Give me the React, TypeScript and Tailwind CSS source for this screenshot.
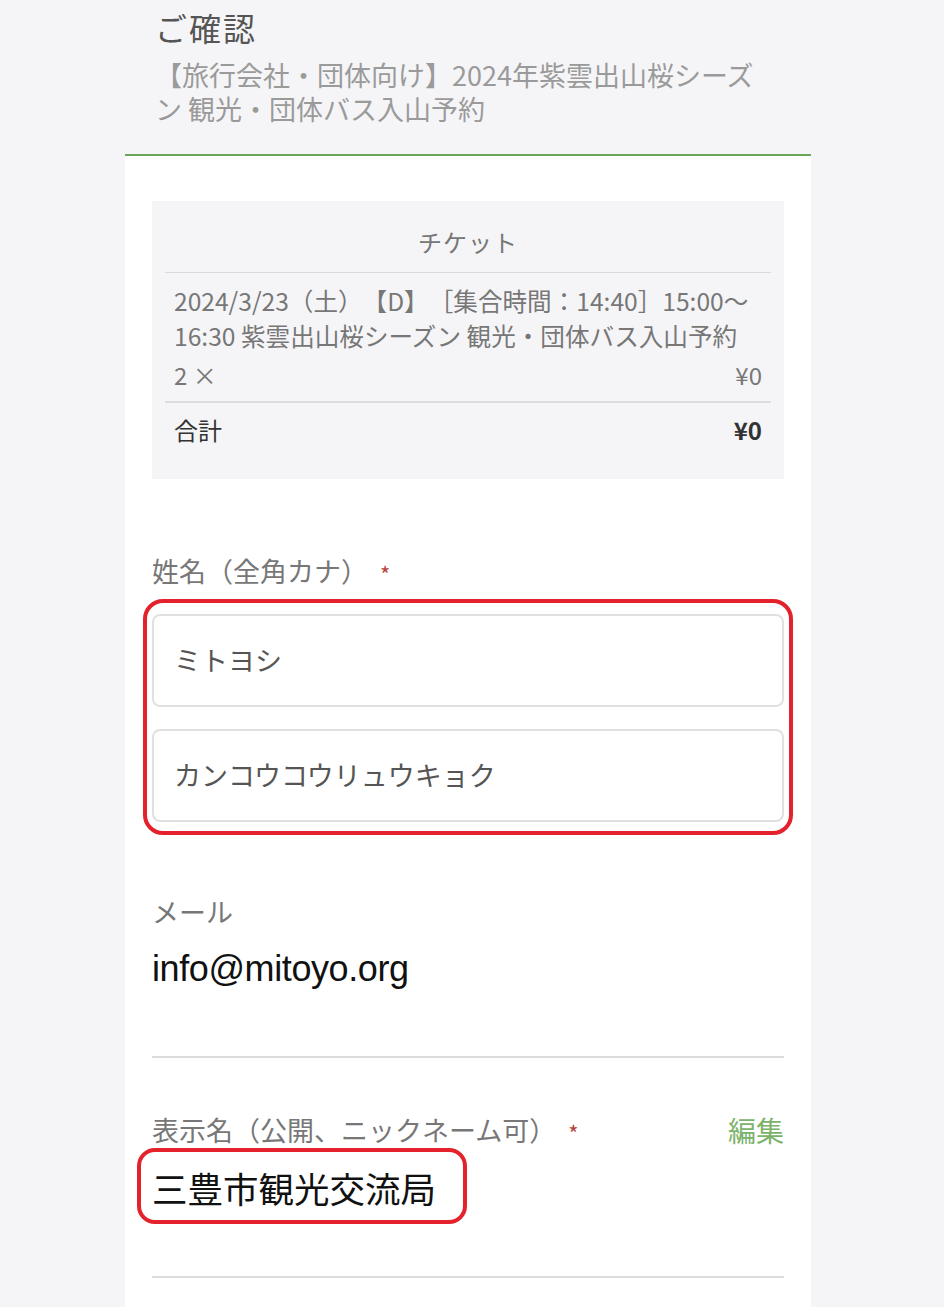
export default function App() {
  return (
    <div className="min-h-[1307px] bg-[#f5f5f7] font-['Noto_Sans_CJK_JP','Noto_Sans',sans-serif] [text-spacing-trim:space-all]">
      <div className="ml-[125px] w-[686px]">
        {/* Header */}
        <div className="px-[30px] pb-[28px] pt-[7px]">
          <h1 className="text-[32px] leading-[40px] tracking-[2px] text-[#555]">ご確認</h1>
          <p className="mt-[11px] max-w-[625px] text-[27px] leading-[34px] text-[#9a9a9a]">
            【旅行会社・団体向け】2024年紫雲出山桜シーズン 観光・団体バス入山予約
          </p>
        </div>

        {/* Card */}
        <div className="border-t-2 border-[#6aa65a] bg-white px-[27px] pb-[40px] pt-[45px]">
          {/* Ticket summary */}
          <div className="bg-[#f5f5f7] px-[13px] pb-[32px]">
            <div className="pb-[13px] pt-[24px] text-center text-[24px] leading-[34px] tracking-[1px] text-[#777]">チケット</div>
            <div className="h-px bg-[#dadada]" />
            <div className="px-[9px] pt-[10px] text-[24.6px] leading-[35px] text-[#777]">
              2024/3/23（土）【D】［集合時間：14:40］15:00〜16:30 紫雲出山桜シーズン 観光・団体バス入山予約
            </div>
            <div className="mt-[5px] flex justify-between px-[9px] text-[24px] leading-[34px] text-[#777]">
              <span>2 ×</span>
              <span>¥0</span>
            </div>
            <div className="mt-[9px] h-[2px] bg-[#dcdcdc]" />
            <div className="flex justify-between px-[9px] pt-[10px] text-[24px] leading-[34px] text-[#333]">
              <span>合計</span>
              <span className="font-bold">¥0</span>
            </div>
          </div>

          {/* Name (kana) */}
          <div className="mt-[75px] flex items-center text-[27px] leading-[34px] text-[#777]">
            <span>姓名（全角カナ）</span>
            <span className="ml-[12px] mt-[4px] text-[22px] leading-none text-[#b5423c]">*</span>
          </div>
          <div className="relative mt-[26px] flex flex-col gap-[22px]">
            <div className="flex h-[93px] items-center rounded-[8px] border-2 border-[#e0e0e0] px-[20px] text-[27px] text-[#555]">
              ミトヨシ
            </div>
            <div className="flex h-[93px] items-center rounded-[8px] border-2 border-[#e0e0e0] px-[20px] text-[27px] text-[#555]">
              カンコウコウリュウキョク
            </div>
            <div className="pointer-events-none absolute -bottom-[13px] -left-[9px] -right-[9px] -top-[15px] rounded-[20px] border-[4px] border-[#e3222c]" />
          </div>

          {/* Email */}
          <div className="mt-[73px] text-[27px] leading-[34px] text-[#777]">メール</div>
          <div className="mt-[18px] font-['Liberation_Sans',sans-serif] text-[36px] leading-[44px] tracking-[-0.4px] text-[#111]">
            info@mitoyo.org
          </div>
          <div className="mt-[65px] h-[2px] bg-[#dcdcdc]" />

          {/* Display name */}
          <div className="mt-[55px] flex items-center justify-between text-[27px] leading-[34px]">
            <span className="flex items-center text-[#777]">
              <span>表示名（公開、ニックネーム可）</span>
              <span className="ml-[12px] mt-[4px] text-[22px] leading-none text-[#b5423c]">*</span>
            </span>
            <span className="text-[28px] text-[#7bb36b]">編集</span>
          </div>
          <div className="mt-[19px]">
            <span className="relative inline-block text-[35.5px] leading-[44px] text-[#111]">
              三豊市観光交流局
              <span className="pointer-events-none absolute -bottom-[14px] -left-[15px] -right-[31px] -top-[18px] rounded-[18px] border-[4px] border-[#e3222c]" />
            </span>
          </div>
          <div className="mt-[66px] h-[2px] bg-[#dcdcdc]" />
        </div>
      </div>
    </div>
  );
}
